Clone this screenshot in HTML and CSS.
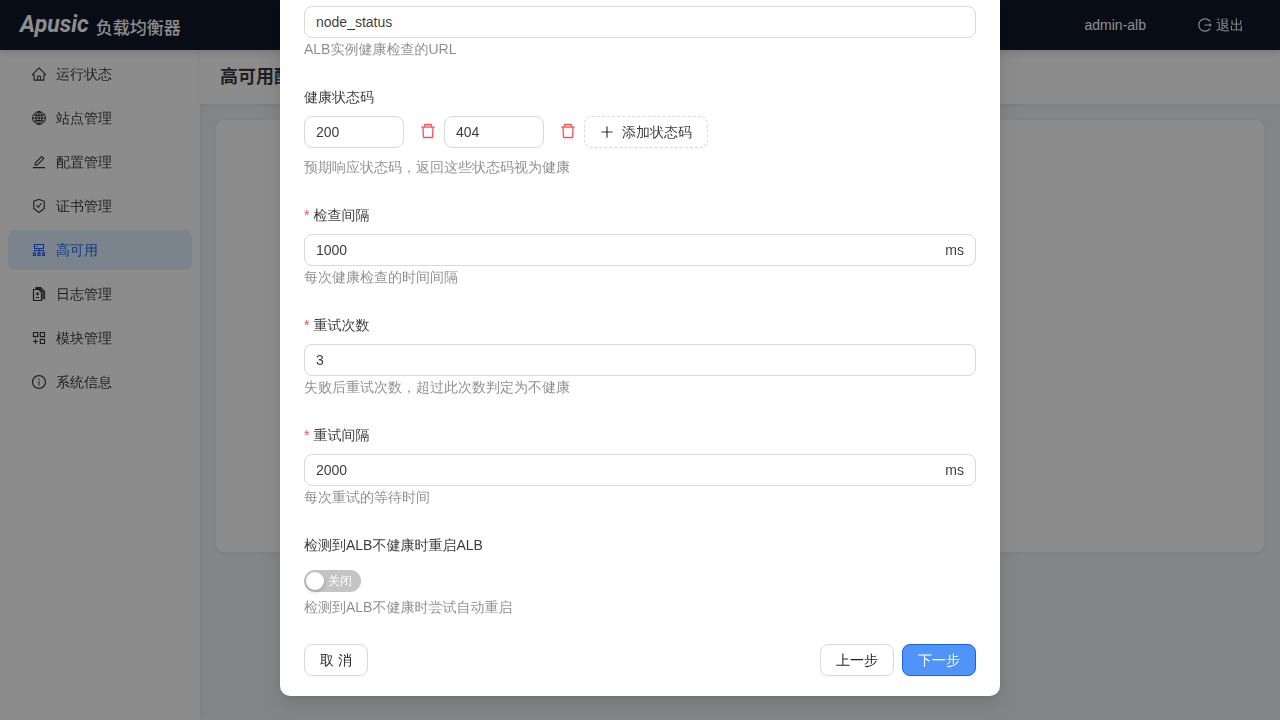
FILE: index.html
```html
<!DOCTYPE html>
<html lang="zh-CN">
<head>
    <meta charset="UTF-8">
    <meta name="viewport" content="width=device-width, initial-scale=1.0">
    <title>负载均衡器</title>
    <link rel="stylesheet" href="styles.css">
</head>
<body>

    <header class="header">
        <div class="logo">
            <span class="logo-brand">Apusic</span>
            <span class="logo-name">负载均衡器</span>
        </div>
        <div class="header-user">
            <span>admin-alb</span>
            <a class="logout" href="#">
                <svg class="icon" viewBox="64 64 896 896"><path d="M868 732h-70.3c-4.8 0-9.3 2.1-12.3 5.8-7 8.5-14.5 16.7-22.4 24.5a353.84 353.84 0 01-112.7 75.9A352.8 352.8 0 01512.4 866c-47.9 0-94.3-9.4-137.9-27.8a353.84 353.84 0 01-112.7-75.9 353.28 353.28 0 01-76-112.5C167.3 606.2 158 559.9 158 512s9.4-94.2 27.8-137.8c17.8-42.1 43.4-80 76-112.5s70.5-58.1 112.7-75.9c43.6-18.4 90-27.8 137.9-27.8 47.9 0 94.3 9.3 137.9 27.8 42.2 17.8 80.1 43.4 112.7 75.9 7.9 7.9 15.3 16.1 22.4 24.5 3 3.7 7.6 5.8 12.3 5.8H868c6.3 0 10.2-7 6.7-12.3C798 160.5 663.8 81.6 511.3 82 271.7 82.6 79.6 277.1 82 516.4 84.4 751.9 276.2 942 512.4 942c152.1 0 285.7-78.8 362.3-197.7 3.4-5.3-.4-12.3-6.7-12.3zm88.9-226.3L815 393.7c-5.3-4.2-13-.4-13 6.3v76H488c-4.4 0-8 3.6-8 8v56c0 4.4 3.6 8 8 8h314v76c0 6.7 7.8 10.5 13 6.3l141.9-112a8 8 0 000-12.6z"/></svg>
                退出
            </a>
        </div>
    </header>

    <div class="layout">
        <nav class="sidebar">
            <a class="menu-item" href="#">
                <svg class="icon" viewBox="64 64 896 896"><path d="M946.5 505L560.1 118.8l-25.9-25.9a31.5 31.5 0 00-44.4 0L77.5 505a63.9 63.9 0 00-18.8 46c.4 35.2 29.7 63.3 64.9 63.3h42.5V940h691.8V614.3h43.4c17.1 0 33.2-6.7 45.3-18.8a63.6 63.6 0 0018.7-45.3c0-17-6.7-33.1-18.8-45.2zM568 868H456V664h112v204zm217.9-325.7V868H632V640c0-22.1-17.9-40-40-40H432c-22.1 0-40 17.9-40 40v228H238.1V542.3h-96l370-369.7 23.1 23.1L882 542.3h-96.1z"/></svg>
                运行状态
            </a>
            <a class="menu-item" href="#">
                <svg class="icon icon-line" viewBox="0 0 14 14"><circle cx="7" cy="7" r="6.4"/><ellipse cx="7" cy="7" rx="3" ry="6.4"/><path d="M7 .6v12.8M.6 7h12.8M1.6 3.7c3.2 1 7.6 1 10.8 0M1.6 10.3c3.2-1 7.6-1 10.8 0"/></svg>
                站点管理
            </a>
            <a class="menu-item" href="#">
                <svg class="icon" viewBox="64 64 896 896"><path d="M257.7 752c2 0 4-.2 6-.5L431.9 722c2-.4 3.9-1.3 5.3-2.8l423.9-423.9a9.96 9.96 0 000-14.1L694.9 114.9c-1.9-1.9-4.4-2.9-7.1-2.9s-5.2 1-7.1 2.9L256.8 538.8c-1.5 1.5-2.4 3.3-2.8 5.3l-29.5 168.2a33.5 33.5 0 009.4 29.8c6.6 6.4 14.9 9.9 23.8 9.9zm67.4-174.4L687.8 215l73.3 73.3-362.7 362.6-88.9 15.7 15.6-89zM880 836H144c-17.7 0-32 14.3-32 32v36c0 4.4 3.6 8 8 8h784c4.4 0 8-3.6 8-8v-36c0-17.7-14.3-32-32-32z"/></svg>
                配置管理
            </a>
            <a class="menu-item" href="#">
                <svg class="icon" viewBox="64 64 896 896"><path d="M866.9 169.9L527.1 54.1C523 52.7 517.5 52 512 52s-11 .7-15.1 2.1L157.1 169.9c-8.3 2.8-15.1 12.4-15.1 21.2v482.4c0 8.8 5.7 20.4 12.6 25.9L499.3 968c3.5 2.7 8 4.1 12.6 4.1s9.2-1.4 12.6-4.1l344.7-268.6c6.9-5.4 12.6-17 12.6-25.9V191.1c.2-8.8-6.6-18.3-14.9-21.2zM810 654.3L512 886.5 214 654.3V226.7l298-101.6 298 101.6v427.6zm-405.8-201c-3-4.1-7.8-6.6-13-6.6H336c-6.5 0-10.3 7.4-6.5 12.7l126.4 174a16.1 16.1 0 0026 0l212.6-292.7c3.8-5.3 0-12.7-6.5-12.7h-55.2c-5.1 0-10 2.5-13 6.6L468.9 542.4l-64.7-89.1z"/></svg>
                证书管理
            </a>
            <a class="menu-item active" href="#">
                <svg class="icon icon-line icon-bold" viewBox="0 0 14 14"><path d="M2.5 1.5h9v4h-9zM7 5.5v5M2.5 9.6V7.5h9v2.1M4.2 3.5h1.2"/><path d="M1.5 10h2v2.5h-2zM6 10h2v2.5H6zM10.5 10h2v2.5h-2z"/></svg>
                高可用
            </a>
            <a class="menu-item" href="#">
                <svg class="icon icon-line icon-bold" viewBox="0 0 14 14"><path d="M1.5 2.5h5.2l2.8 2.8v8.2h-8zM3.4.7h5.2l3.9 3.7v7.9M3.4 1.9h4.4l3.2 3v7.6M5.5 5.2v3.2M3.9 6.8h3.2M3.9 10.5h3.2"/></svg>
                日志管理
            </a>
            <a class="menu-item" href="#">
                <svg class="icon icon-line icon-bold" viewBox="0 0 14 14"><path d="M1.5 1.5h4.2v4.2H1.5zM8.3 1.5h4.2v4.2H8.3zM8.3 8.3h4.2v4.2H8.3zM3.5 8v4.8M1 10.5h5"/></svg>
                模块管理
            </a>
            <a class="menu-item" href="#">
                <svg class="icon" viewBox="64 64 896 896"><path d="M512 64C264.6 64 64 264.6 64 512s200.6 448 448 448 448-200.6 448-448S759.4 64 512 64zm0 820c-205.4 0-372-166.6-372-372s166.6-372 372-372 372 166.6 372 372-166.6 372-372 372z"/><path d="M464 336a48 48 0 1096 0 48 48 0 10-96 0zm72 112h-48c-4.4 0-8 3.6-8 8v272c0 4.4 3.6 8 8 8h48c4.4 0 8-3.6 8-8V456c0-4.4-3.6-8-8-8z"/></svg>
                系统信息
            </a>
        </nav>

        <main class="main">
            <h1 class="page-title">高可用配置</h1>
            <div class="card"></div>
        </main>
    </div>

    <!-- Health check step of the config dialog -->
    <div class="modal-mask">
        <form class="modal" role="dialog" aria-modal="true">
            <div class="form-item">
                <input class="input" type="text" aria-label="URL" value="node_status">
                <p class="hint">ALB实例健康检查的URL</p>
            </div>

            <div class="form-item">
                <label class="form-label" for="statusCode">健康状态码</label>
                <div class="code-list">
                    <input class="input code-input" type="text" id="statusCode" value="200">
                    <button class="delete-btn" type="button" aria-label="删除">
                        <svg class="icon-delete" viewBox="64 64 896 896"><path d="M360 184h-8c4.4 0 8-3.6 8-8v8h304v-8c0 4.4 3.6 8 8 8h-8v72h72v-80c0-35.3-28.7-64-64-64H352c-35.3 0-64 28.7-64 64v80h72v-72zm504 72H160c-17.7 0-32 14.3-32 32v32c0 4.4 3.6 8 8 8h60.4l24.7 523c1.6 34.1 29.8 61 63.9 61h454c34.2 0 62.3-26.8 63.9-61l24.7-523H888c4.4 0 8-3.6 8-8v-32c0-17.7-14.3-32-32-32zM731.3 840H292.7l-24.2-512h487l-24.2 512z"/></svg>
                    </button>
                    <input class="input code-input" type="text" aria-label="健康状态码" value="404">
                    <button class="delete-btn" type="button" aria-label="删除">
                        <svg class="icon-delete" viewBox="64 64 896 896"><path d="M360 184h-8c4.4 0 8-3.6 8-8v8h304v-8c0 4.4 3.6 8 8 8h-8v72h72v-80c0-35.3-28.7-64-64-64H352c-35.3 0-64 28.7-64 64v80h72v-72zm504 72H160c-17.7 0-32 14.3-32 32v32c0 4.4 3.6 8 8 8h60.4l24.7 523c1.6 34.1 29.8 61 63.9 61h454c34.2 0 62.3-26.8 63.9-61l24.7-523H888c4.4 0 8-3.6 8-8v-32c0-17.7-14.3-32-32-32zM731.3 840H292.7l-24.2-512h487l-24.2 512z"/></svg>
                    </button>
                    <button class="btn btn-dashed" type="button">
                        <svg class="icon" viewBox="64 64 896 896"><path d="M482 152h60q8 0 8 8v704q0 8-8 8h-60q-8 0-8-8V160q0-8 8-8z"/><path d="M192 474h672q8 0 8 8v60q0 8-8 8H160q-8 0-8-8v-60q0-8 8-8z"/></svg>
                        添加状态码
                    </button>
                </div>
                <p class="hint">预期响应状态码，返回这些状态码视为健康</p>
            </div>

            <div class="form-item">
                <label class="form-label required" for="checkInterval">检查间隔</label>
                <div class="input input-group">
                    <input type="text" id="checkInterval" value="1000" required>
                    <span>ms</span>
                </div>
                <p class="hint">每次健康检查的时间间隔</p>
            </div>

            <div class="form-item">
                <label class="form-label required" for="retryCount">重试次数</label>
                <input class="input" type="text" id="retryCount" value="3" required>
                <p class="hint">失败后重试次数，超过此次数判定为不健康</p>
            </div>

            <div class="form-item">
                <label class="form-label required" for="retryInterval">重试间隔</label>
                <div class="input input-group">
                    <input type="text" id="retryInterval" value="2000" required>
                    <span>ms</span>
                </div>
                <p class="hint">每次重试的等待时间</p>
            </div>

            <div class="form-item">
                <label class="form-label" for="autoRestart">检测到ALB不健康时重启ALB</label>
                <div class="switch-row">
                    <label class="switch">
                        <input type="checkbox" role="switch" id="autoRestart">
                        <span>关闭</span>
                    </label>
                </div>
                <p class="hint">检测到ALB不健康时尝试自动重启</p>
            </div>

            <div class="modal-footer">
                <button class="btn" type="button">取 消</button>
                <div class="footer-steps">
                    <button class="btn" type="button">上一步</button>
                    <button class="btn btn-primary" type="submit">下一步</button>
                </div>
            </div>
        </form>
    </div>

</body>
</html>
```
FILE: styles.css
```css
* {
    box-sizing: border-box;
}
body {
    margin: 0;
    min-height: 100vh;
    display: flex;
    flex-direction: column;
    font-family: "Liberation Sans", "WenQuanYi Zen Hei", "Noto Sans CJK SC", sans-serif;
    font-size: 14px;
    line-height: 22px;
    color: rgba(0, 0, 0, 0.78);
    background: #f0f2f5;
}
a {
    color: inherit;
    text-decoration: none;
}
input,
button {
    font: inherit;
    color: inherit;
}
.icon {
    width: 14px;
    height: 14px;
    flex: none;
    fill: currentColor;
}
.icon-line {
    fill: none;
    stroke: currentColor;
    stroke-width: 1;
}
.icon-bold {
    stroke-width: 1.2;
}

/* Header */
.header {
    position: relative;
    z-index: 1;
    height: 50px;
    padding: 0 36px 0 20px;
    display: flex;
    justify-content: space-between;
    align-items: center;
    color: #fff;
    background: #0f172a;
    box-shadow: 0 2px 8px rgba(0, 0, 0, 0.15);
}
.logo {
    display: flex;
    align-items: center;
    gap: 7px;
}
.logo-brand {
    font-family: Roboto, "Liberation Sans", sans-serif;
    font-size: 23px;
    font-style: italic;
    font-weight: bold;
}
.logo-name {
    padding-top: 4px;
    font-family: "Noto Sans CJK SC", sans-serif;
    font-size: 17px;
    font-weight: 500;
}
.header-user {
    display: flex;
    gap: 52px;
}
.logout {
    display: flex;
    align-items: center;
    gap: 4px;
}

/* Layout */
.layout {
    flex: 1;
    display: flex;
}
.sidebar {
    width: 200px;
    flex: none;
    padding: 4px 8px;
    display: flex;
    flex-direction: column;
    gap: 4px;
    background: #fff;
    box-shadow: 2px 0 8px rgba(0, 0, 0, 0.05);
}
.menu-item {
    height: 40px;
    padding: 0 24px;
    display: flex;
    align-items: center;
    gap: 10px;
    border-radius: 6px;
}
.menu-item.active {
    color: #2468f2;
    background: #e0efff;
}
.main {
    flex: 1;
    min-width: 0;
}
.page-title {
    margin: 0;
    padding: 16px 20px;
    font-family: "Liberation Sans", "Noto Sans CJK SC", sans-serif;
    font-size: 18px;
    font-weight: bold;
    background: #fff;
    box-shadow: 0 1px 4px rgba(0, 0, 0, 0.08);
}
.card {
    min-height: 60vh;
    margin: 16px;
    border-radius: 8px;
    background: #fff;
    box-shadow: 0 1px 4px rgba(0, 0, 0, 0.05);
}

/* Modal, scrolled to its last fields */
.modal-mask {
    position: fixed;
    inset: 0;
    z-index: 10;
    display: flex;
    justify-content: center;
    align-items: flex-end;
    padding-bottom: 24px;
    overflow: hidden;
    background: rgba(0, 0, 0, 0.45);
}
.modal {
    width: 720px;
    max-width: 100%;
    padding: 20px 24px;
    border-radius: 10px;
    background: #fff;
    box-shadow: 0 6px 16px 0 rgba(0, 0, 0, 0.08), 0 3px 6px -4px rgba(0, 0, 0, 0.12), 0 9px 28px 8px rgba(0, 0, 0, 0.05);
}
.form-item {
    margin-bottom: 26px;
}
.form-label {
    display: block;
    width: fit-content;
    margin-bottom: 8px;
}
.form-label.required::before {
    content: "*";
    margin-right: 4px;
    color: #ff4d4f;
}
.hint {
    margin: 0;
    color: rgba(0, 0, 0, 0.45);
}
.input {
    display: block;
    width: 100%;
    height: 32px;
    padding: 4px 11px;
    border: 1px solid #d9d9d9;
    border-radius: 8px;
    outline: none;
    background: #fff;
}
.input-group {
    display: flex;
    align-items: center;
    gap: 4px;
}
.input-group input {
    flex: 1;
    min-width: 0;
    padding: 0;
    border: none;
    outline: none;
    background: transparent;
}
.code-list {
    display: flex;
    align-items: center;
    margin-bottom: 8px;
}
.code-input {
    width: 100px;
}
.delete-btn {
    width: 40px;
    height: 32px;
    padding: 0 8px 2px 16px;
    display: flex;
    align-items: center;
    border: none;
    background: transparent;
    color: #ff4d4f;
    cursor: pointer;
}
.icon-delete {
    width: 16px;
    height: 16px;
    fill: currentColor;
}

/* Buttons */
.btn {
    height: 32px;
    padding: 0 15px;
    display: flex;
    align-items: center;
    gap: 8px;
    border: 1px solid #d9d9d9;
    border-radius: 8px;
    background: #fff;
    color: rgba(0, 0, 0, 0.88);
    box-shadow: 0 2px 0 rgba(0, 0, 0, 0.02);
    cursor: pointer;
}
.btn-dashed {
    border-style: dashed;
    color: rgba(0, 0, 0, 0.78);
}
.btn-primary {
    color: #fff;
    border-color: #1a62e0;
    background: #5093f9;
}
.modal-footer {
    display: flex;
    justify-content: space-between;
}
.footer-steps {
    display: flex;
    gap: 8px;
}

/* Switch */
.switch-row {
    height: 32px;
    padding-top: 6px;
}
.switch {
    width: 57px;
    height: 22px;
    padding: 2px;
    display: flex;
    align-items: center;
    gap: 4px;
    border-radius: 11px;
    background: #c4c4c4;
    color: #fff;
    font-size: 12px;
    cursor: pointer;
}
.switch input {
    appearance: none;
    width: 18px;
    height: 18px;
    margin: 0;
    border-radius: 50%;
    background: #fff;
    box-shadow: 0 2px 4px rgba(0, 35, 11, 0.2);
    cursor: pointer;
}
```
